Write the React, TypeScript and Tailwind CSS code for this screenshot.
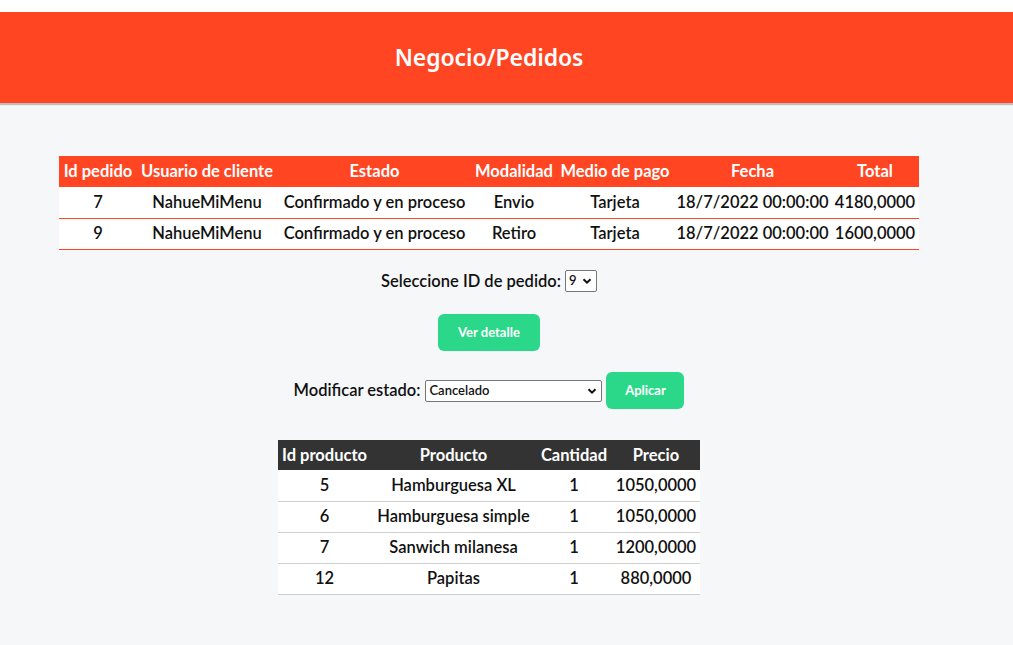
import { useState } from 'react';

const pedidos = [
  { id: 7, usuario: 'NahueMiMenu', estado: 'Confirmado y en proceso', modalidad: 'Envio', pago: 'Tarjeta', fecha: '18/7/2022 00:00:00', total: '4180,0000' },
  { id: 9, usuario: 'NahueMiMenu', estado: 'Confirmado y en proceso', modalidad: 'Retiro', pago: 'Tarjeta', fecha: '18/7/2022 00:00:00', total: '1600,0000' },
];

const detalle = [
  { id: 5, producto: 'Hamburguesa XL', cantidad: 1, precio: '1050,0000' },
  { id: 6, producto: 'Hamburguesa simple', cantidad: 1, precio: '1050,0000' },
  { id: 7, producto: 'Sanwich milanesa', cantidad: 1, precio: '1200,0000' },
  { id: 12, producto: 'Papitas', cantidad: 1, precio: '880,0000' },
];

function Chevron() {
  return (
    <svg width="10" height="10" viewBox="0 0 10 10" className="shrink-0">
      <path d="M1.5 3.2 L5 6.7 L8.5 3.2" fill="none" stroke="#111" strokeWidth="2" />
    </svg>
  );
}

function FakeSelect({ value, className }: { value: string; className: string }) {
  return (
    <div
      className={`flex items-center justify-between bg-white border border-[#767676] rounded-[2px] pl-[3px] pr-[4px] text-[13px] text-[#111] ${className}`}
    >
      <span>{value}</span>
      <Chevron />
    </div>
  );
}

export default function App() {
  const [sel] = useState('9');

  return (
    <div className="min-h-[645px] font-['Lato',sans-serif] text-[#111] pt-[12px] bg-gradient-to-b from-white from-[12px] to-[#f6f7f9] to-[12px]">
      <header className="h-[91px] bg-[#ff4521] shadow-[0_2px_1px_#bdbdbd]">
        <div className="w-[978px] h-full flex items-center justify-center">
          <h1 className="font-['Noto_Sans',sans-serif] font-semibold text-white text-[23px] tracking-[-0.1px]">
            Negocio/Pedidos
          </h1>
        </div>
      </header>

      <main className="w-[978px] flex flex-col items-center pt-[53px]">
        <table className="table-fixed w-[860px] border-collapse text-[16.5px] font-semibold text-center">
          <colgroup>
            <col className="w-[78px]" />
            <col className="w-[140px]" />
            <col className="w-[195px]" />
            <col className="w-[84px]" />
            <col className="w-[118px]" />
            <col className="w-[157px]" />
            <col className="w-[88px]" />
          </colgroup>
          <thead>
            <tr className="bg-[#ff4521] text-white h-[31px] font-bold">
              <th className="whitespace-nowrap">Id pedido</th>
              <th className="whitespace-nowrap">Usuario de cliente</th>
              <th>Estado</th>
              <th>Modalidad</th>
              <th className="whitespace-nowrap">Medio de pago</th>
              <th>Fecha</th>
              <th>Total</th>
            </tr>
          </thead>
          <tbody>
            {pedidos.map((p) => (
              <tr key={p.id} className="bg-white h-[31px] border-b border-[#ff4521]">
                <td>{p.id}</td>
                <td>{p.usuario}</td>
                <td className="whitespace-nowrap">{p.estado}</td>
                <td>{p.modalidad}</td>
                <td>{p.pago}</td>
                <td className="whitespace-nowrap">{p.fecha}</td>
                <td>{p.total}</td>
              </tr>
            ))}
          </tbody>
        </table>

        <div className="flex items-center gap-[4px] mt-[19px] text-[16.5px] font-semibold">
          <span>Seleccione ID de pedido:</span>
          <FakeSelect value={sel} className="w-[32px] h-[22px] gap-[3px]" />
        </div>

        <button className="mt-[21px] w-[102px] h-[37px] rounded-[6px] bg-[#2bd889] text-white text-[13px] font-bold">
          Ver detalle
        </button>

        <div className="flex items-center mt-[21px] text-[16.5px] font-semibold">
          <span>Modificar estado:</span>
          <FakeSelect value="Cancelado" className="ml-[5px] w-[177px] h-[22px]" />
          <button className="ml-[4px] w-[78px] h-[37px] rounded-[6px] bg-[#2bd889] text-white text-[13px] font-bold">
            Aplicar
          </button>
        </div>

        <table className="table-fixed w-[422px] border-collapse text-[16.5px] font-semibold text-center mt-[31px]">
          <colgroup>
            <col className="w-[93px]" />
            <col className="w-[165px]" />
            <col className="w-[76px]" />
            <col className="w-[88px]" />
          </colgroup>
          <thead>
            <tr className="bg-[#333333] text-white h-[30px] font-bold">
              <th className="whitespace-nowrap text-left pl-[4px]">Id producto</th>
              <th>Producto</th>
              <th>Cantidad</th>
              <th>Precio</th>
            </tr>
          </thead>
          <tbody>
            {detalle.map((d) => (
              <tr key={d.id} className="bg-white h-[31px] border-b border-[#cfcfcf]">
                <td>{d.id}</td>
                <td className="whitespace-nowrap">{d.producto}</td>
                <td>{d.cantidad}</td>
                <td>{d.precio}</td>
              </tr>
            ))}
          </tbody>
        </table>
      </main>
    </div>
  );
}
